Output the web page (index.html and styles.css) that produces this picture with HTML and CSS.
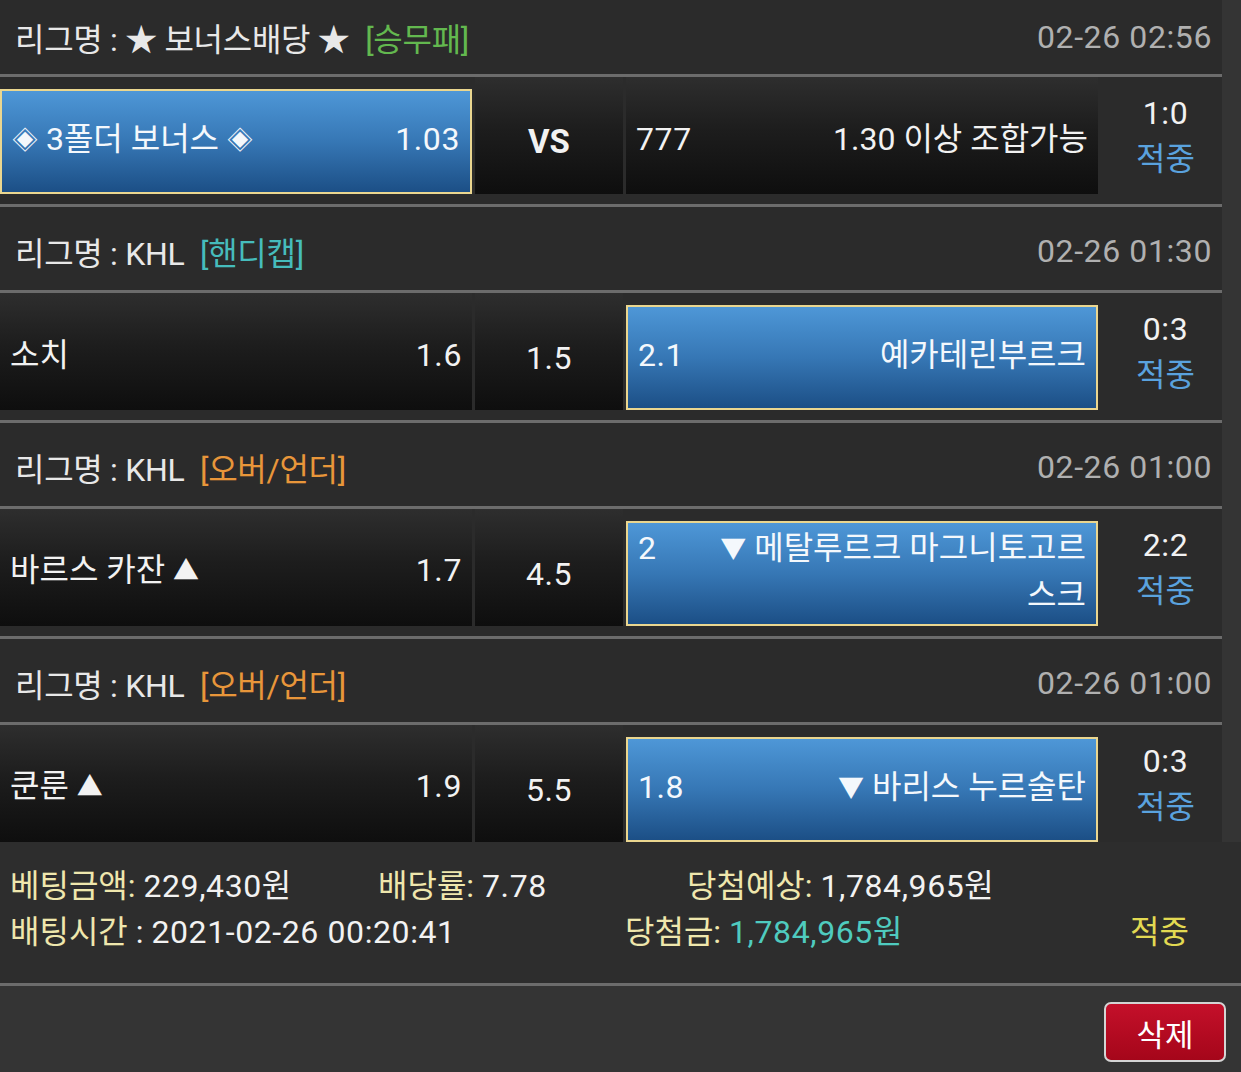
FILE: index.html
```html
<!DOCTYPE html>
<html lang="ko">
<head>
<meta charset="utf-8">
<title>베팅내역</title>
<link rel="stylesheet" href="styles.css">
</head>
<body>
<div class="list">
  <div class="league first">
    <span class="lname">리그명 : ★ 보너스배당 ★ <span class="type t-green">[승무패]</span></span>
    <span class="date">02-26 02:56</span>
  </div>
  <div class="match">
    <div class="cell home sel"><div class="in"><span class="odds">1.03</span><span class="team"><span class="sym">◈</span> 3폴더 보너스 <span class="sym">◈</span></span></div></div>
    <div class="cell mid"><b class="vs">VS</b></div>
    <div class="cell away"><div class="in"><span class="odds">777</span><span class="team">1.30 이상 조합가능</span></div></div>
    <div class="score"><div class="num">1:0</div><div class="hit">적중</div></div>
  </div>

  <div class="league">
    <span class="lname">리그명 : KHL <span class="type t-teal">[핸디캡]</span></span>
    <span class="date">02-26 01:30</span>
  </div>
  <div class="match">
    <div class="cell home"><div class="in"><span class="odds">1.6</span><span class="team">소치</span></div></div>
    <div class="cell mid num">1.5</div>
    <div class="cell away sel"><div class="in"><span class="odds">2.1</span><span class="team">예카테린부르크</span></div></div>
    <div class="score"><div class="num">0:3</div><div class="hit">적중</div></div>
  </div>

  <div class="league">
    <span class="lname">리그명 : KHL <span class="type t-orange">[오버/언더]</span></span>
    <span class="date">02-26 01:00</span>
  </div>
  <div class="match">
    <div class="cell home"><div class="in"><span class="odds">1.7</span><span class="team">바르스 카잔 <span class="sym">▲</span></span></div></div>
    <div class="cell mid num">4.5</div>
    <div class="cell away sel"><div class="in"><span class="odds">2</span><span class="team"><span class="sym">▼</span> 메탈루르크 마그니토고르스크</span></div></div>
    <div class="score"><div class="num">2:2</div><div class="hit">적중</div></div>
  </div>

  <div class="league">
    <span class="lname">리그명 : KHL <span class="type t-orange">[오버/언더]</span></span>
    <span class="date">02-26 01:00</span>
  </div>
  <div class="match last">
    <div class="cell home"><div class="in"><span class="odds">1.9</span><span class="team">쿤룬 <span class="sym">▲</span></span></div></div>
    <div class="cell mid num">5.5</div>
    <div class="cell away sel"><div class="in"><span class="odds">1.8</span><span class="team"><span class="sym">▼</span> 바리스 누르술탄</span></div></div>
    <div class="score"><div class="num">0:3</div><div class="hit">적중</div></div>
  </div>
</div>

<div class="summary">
  <div class="sline one">
    <span><span class="lbl">베팅금액:</span> <span class="num">229,430</span>원</span>
    <span><span class="lbl">배당률:</span> <span class="num">7.78</span></span>
    <span><span class="lbl">당첨예상:</span> <span class="num">1,784,965</span>원</span>
  </div>
  <div class="sline two">
    <span><span class="lbl">배팅시간</span> : <span class="num">2021-02-26 00:20:41</span></span>
    <span><span class="lbl">당첨금:</span> <span class="win"><span class="num">1,784,965</span>원</span></span>
    <span class="result">적중</span>
  </div>
</div>

<div class="actions">
  <button class="btn-del" type="button">삭제</button>
</div>
</body>
</html>
```

FILE: styles.css
```css
* {
  box-sizing: border-box;
}

body {
  margin: 0;
  width: 1241px;
  background: #343434;
  font-family: Roboto, "Noto Sans CJK KR", sans-serif;
  font-size: 32px;
  color: #f2f2f2;
}

.num,
.odds,
.date {
  letter-spacing: 0.6px;
}

.list {
  width: 1222px;
  background: #2b2b2b;
}

.league {
  height: 86px;
  padding: 5px 10px 0 15px;
  display: flex;
  align-items: center;
  justify-content: space-between;
  border-bottom: 3px solid #6c6c6c;
  color: #e8e8e8;
  white-space: nowrap;
}

.league.first {
  height: 77px;
  padding-top: 0;
}

.lname {
  letter-spacing: -0.3px;
}

.type {
  margin-left: 8px;
}

.t-green { color: #63b84f; }
.t-teal { color: #46bcbc; }
.t-orange { color: #e8963a; }

.date {
  color: #b0b0b0;
}

.sym {
  font-size: 26px;
  vertical-align: 1px;
}

.match {
  display: grid;
  grid-template-columns: 472px 148px 472px 1fr;
  column-gap: 3px;
  height: 130px;
  padding-bottom: 10px;
  border-bottom: 3px solid #6c6c6c;
}

.match.last {
  height: 117px;
  padding-bottom: 0;
  border-bottom: 0;
}

.cell {
  display: flex;
  align-items: center;
  padding: 6px 10px 0;
  background: linear-gradient(to bottom, #2e2e2e 0%, #1d1d1d 45%, #0e0e0e 100%);
  line-height: 46px;
}

.cell .in {
  display: flow-root;
  width: 100%;
}

.home .odds {
  float: right;
}

.home .team {
  display: block;
  text-align: left;
}

.away .odds {
  float: left;
  margin-right: 40px;
}

.away .team {
  display: block;
  text-align: right;
}

.cell.mid {
  justify-content: center;
  padding-top: 12px;
}

.vs {
  font-weight: 700;
  font-size: 33px;
}

.cell.sel {
  margin-top: 12px;
  padding: 0 10px 5px;
  border: 2px solid #ead68f;
  background: linear-gradient(to bottom, #4e97d7 0%, #3677b5 50%, #1c4f86 100%);
  color: #f4f8fc;
}

.score {
  display: flex;
  flex-direction: column;
  justify-content: center;
  align-items: center;
  padding-left: 8px;
  line-height: 46px;
}

.hit {
  color: #5aa2de;
}

.summary {
  width: 1241px;
  height: 144px;
  padding: 21px 0 0 10px;
  background: #2d2d2d;
  border-bottom: 3px solid #6c6c6c;
  line-height: 46px;
  white-space: nowrap;
}

.sline {
  display: grid;
}

.sline.one {
  grid-template-columns: 368px 309px 1fr;
}

.sline.two {
  grid-template-columns: 615px 505px 1fr;
}

.lbl {
  color: #efe7ad;
}

.win {
  color: #4fcbbf;
}

.result {
  color: #e2d952;
}

.actions {
  display: flex;
  justify-content: flex-end;
  padding: 16px 15px 0 0;
  height: 86px;
}

.btn-del {
  width: 122px;
  height: 60px;
  border: 2px solid #d4d4d4;
  border-radius: 7px;
  background: linear-gradient(to bottom, #c4102a 0%, #a5061a 100%);
  color: #ffffff;
  font-family: Roboto, "Noto Sans CJK KR", sans-serif;
  font-size: 31px;
  padding: 0;
}
```
